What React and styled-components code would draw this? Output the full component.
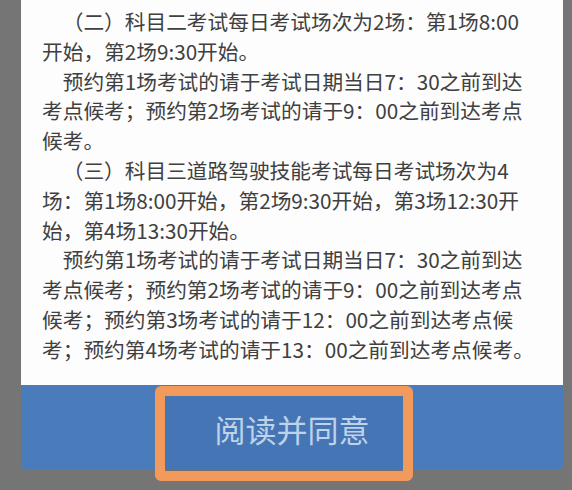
import React from "react";
import styled, { createGlobalStyle } from "styled-components";

const GlobalStyle = createGlobalStyle`
  html, body {
    margin: 0;
    padding: 0;
    background: #757575;
  }
  body {
    font-family: "Noto Sans CJK SC", "Noto Sans", sans-serif;
  }
`;

const Screen = styled.div`
  width: 572px;
  height: 490px;
  overflow: hidden;
  background: #757575;
  padding: 0 9px 0 21px;
  box-sizing: border-box;
`;

const Dialog = styled.div`
  display: flex;
  flex-direction: column;
`;

const Body = styled.div`
  background: #fdfdfd;
  padding: 7px 21px 20px 21px;
  color: #404040;
  font-size: 20.7px;
  line-height: 29.8px;
`;

const Para = styled.p`
  margin: 0;
`;

const Line = styled.span`
  display: block;
  white-space: nowrap;
  padding-left: ${(p) => (p.$indent ? "1em" : "0")};
`;

const Footer = styled.div`
  position: relative;
  height: 84px;
  background: #4a7bbb;
  border-radius: 0 0 4px 4px;
  display: flex;
  align-items: center;
  justify-content: center;
`;

const AgreeButton = styled.button`
  border: none;
  background: transparent;
  color: #c9def4;
  font-family: inherit;
  font-size: 31px;
  padding: 4px 0 0 0;
  cursor: pointer;
`;

// orange frame drawn over the footer button
const Highlight = styled.div`
  position: absolute;
  left: 134px;
  top: 1px;
  width: 258px;
  height: 95px;
  box-sizing: border-box;
  border: 10px solid #f29a5c;
  border-radius: 6px;
  background: rgba(20, 40, 90, 0.06);
  pointer-events: none;
`;

const paragraphs = [
  ["（二）科目二考试每日考试场次为2场：第1场8:00", "开始，第2场9:30开始。"],
  [
    "预约第1场考试的请于考试日期当日7：30之前到达",
    "考点候考；预约第2场考试的请于9：00之前到达考点",
    "候考。",
  ],
  [
    "（三）科目三道路驾驶技能考试每日考试场次为4",
    "场：第1场8:00开始，第2场9:30开始，第3场12:30开",
    "始，第4场13:30开始。",
  ],
  [
    "预约第1场考试的请于考试日期当日7：30之前到达",
    "考点候考；预约第2场考试的请于9：00之前到达考点",
    "候考；预约第3场考试的请于12：00之前到达考点候",
    "考；预约第4场考试的请于13：00之前到达考点候考。",
  ],
];

export default function App() {
  return (
    <>
      <GlobalStyle />
      <Screen>
        <Dialog>
          <Body>
            {paragraphs.map((lines, i) => (
              <Para key={i}>
                {lines.map((l, j) => (
                  <Line key={j} $indent={j === 0}>
                    {l}
                  </Line>
                ))}
              </Para>
            ))}
          </Body>
          <Footer>
            <AgreeButton>阅读并同意</AgreeButton>
            <Highlight />
          </Footer>
        </Dialog>
      </Screen>
    </>
  );
}
